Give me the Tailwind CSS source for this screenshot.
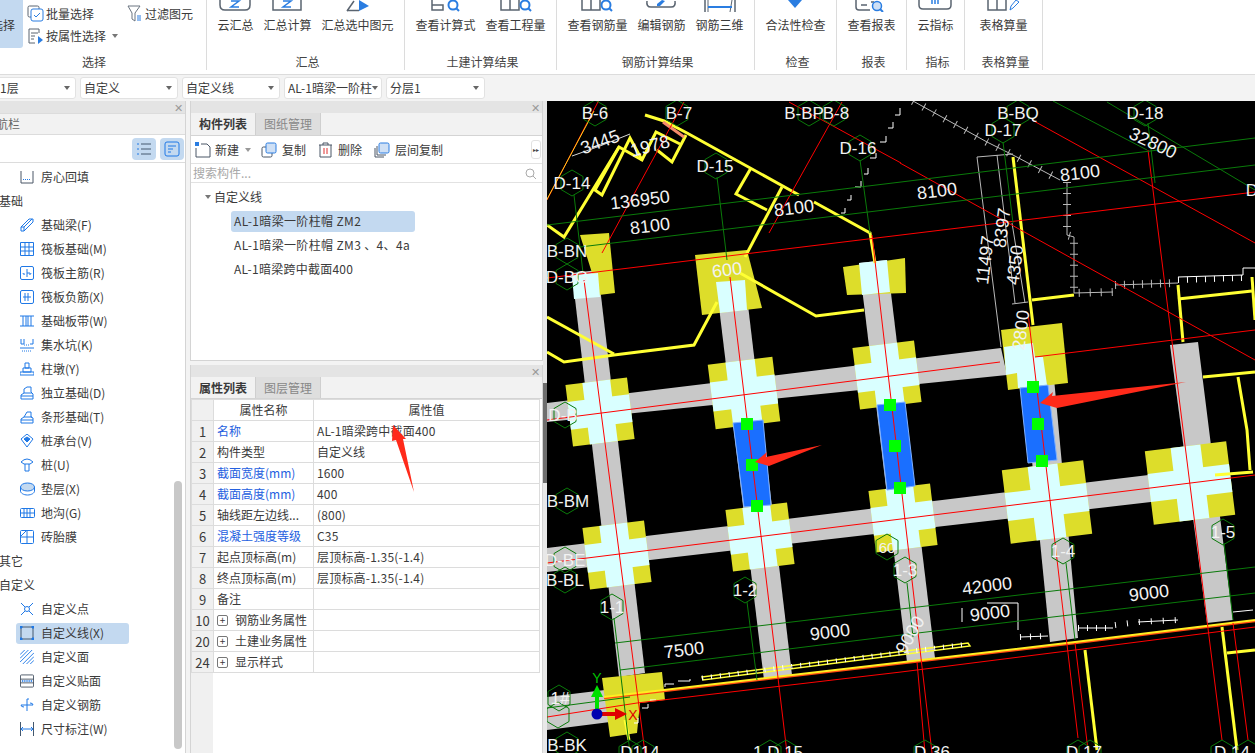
<!DOCTYPE html>
<html lang="zh"><head><meta charset="utf-8"><script src="https://cdn.jsdelivr.net/npm/@tailwindcss/browser@4"></script></head>
<body class="w-[1255px] h-[753px] overflow-hidden bg-[#f3f3f3] text-[#3a3a3a] text-[12px] font-['Noto_Sans_CJK_SC',sans-serif]">

<!-- Ribbon -->
<header class="flex h-[75px] bg-white border-b border-[#dcdcdc] overflow-hidden">
  <section class="relative w-[207px] h-[70px] border-r border-[#dcdcdc] shrink-0">
    <div class="absolute left-0 top-0 w-[23px] h-[48px] bg-[#c3d9f0] rounded-br-[3px] overflow-hidden"><span class="absolute left-[-9px] top-[17px] w-[36px] leading-[16px]">选择</span></div>
    <div class="absolute left-[27px] top-[5px] flex items-center gap-[2px]"><svg class="w-[17px] h-[17px]" viewBox="0 0 17 17" fill="none"><rect x="1" y="1" width="11" height="11" rx="1.5" stroke="#5a6470"/><rect x="4" y="4" width="12" height="12" rx="2" fill="#fff" stroke="#2a7de1"/><path d="M7 10l2 2 4-4" stroke="#2a7de1"/></svg><span class="leading-[16px]">批量选择</span></div>
    <div class="absolute left-[127px] top-[5px] flex items-center gap-[3px]"><svg class="w-[15px] h-[17px]" viewBox="0 0 15 17" fill="none"><path d="M1 1h12L8 8v8L5 14V8z" stroke="#6a7480"/><path d="M10 11h4M10 13h4M10 15h4" stroke="#2a7de1"/></svg><span class="leading-[16px]">过滤图元</span></div>
    <div class="absolute left-[28px] top-[28px] flex items-center gap-[2px]"><svg class="w-[16px] h-[16px]" viewBox="0 0 16 16" fill="none"><path d="M11 1H1v14h6M3 5h7M3 8h4M3 11h3M11 1v4" stroke="#5a6470"/><path d="M10 8l5 4-5 4z" fill="#2a7de1"/></svg><span class="leading-[16px]">按属性选择</span><span class="ml-[4px] w-0 h-0 border-x-[3px] border-x-transparent border-t-[4px] border-t-[#777]"></span></div>
    <div class="absolute left-0 right-0 bottom-0 text-center pr-[18px] leading-[16px] text-[#444]">选择</div>
  </section>
  <section class="flex flex-col justify-between items-center w-[198px] h-[70px] border-r border-[#dcdcdc] shrink-0">
    <div class="flex gap-[10px]">
      <div class="flex flex-col items-center gap-[5px]"><svg class="w-[36px] h-[12px]" viewBox="0 0 36 12" fill="none"><path d="M3 0v5q0 5 5 5h20q5 0 5-5V0" stroke="#5a6470" stroke-width="1.5"/><path d="M14 1h8l-8 6h8" stroke="#2a7de1" stroke-width="1.5"/></svg><span class="leading-[16px]">云汇总</span></div>
      <div class="flex flex-col items-center gap-[5px]"><svg class="w-[48px] h-[12px]" viewBox="0 0 48 12" fill="none"><path d="M10 0v10h28V0" stroke="#5a6470" stroke-width="1.5"/><path d="M20 1h8l-8 6h8" stroke="#2a7de1" stroke-width="1.5"/></svg><span class="leading-[16px]">汇总计算</span></div>
      <div class="flex flex-col items-center gap-[5px]"><svg class="w-[72px] h-[12px]" viewBox="0 0 72 12" fill="none"><path d="M25 11L32 1" stroke="#5a6470" stroke-width="1.5"/><path d="M25 10.5h12" stroke="#5a6470" stroke-width="1.5"/><path d="M37 0l10 6-10 5z" fill="#2a7de1"/></svg><span class="leading-[16px]">汇总选中图元</span></div>
    </div>
    <div class="pl-[4px] leading-[16px] text-[#444]">汇总</div>
  </section>
  <section class="flex flex-col justify-between items-center w-[152px] h-[70px] border-r border-[#dcdcdc] shrink-0">
    <div class="flex gap-[10px]">
      <div class="flex flex-col items-center gap-[5px]"><svg class="w-[60px] h-[12px]" viewBox="0 0 60 12" fill="none"><path d="M17 0v10h11V5h-11" stroke="#5a6470" stroke-width="1.5"/><circle cx="38" cy="5" r="4.5" stroke="#2a7de1" stroke-width="2"/><path d="M41 8l3 3" stroke="#2a7de1" stroke-width="2"/></svg><span class="leading-[16px]">查看计算式</span></div>
      <div class="flex flex-col items-center gap-[5px]"><svg class="w-[60px] h-[12px]" viewBox="0 0 60 12" fill="none"><path d="M15 0v10h18V0M24 0v10" stroke="#5a6470" stroke-width="1.5"/><circle cx="39" cy="5" r="4.5" stroke="#2a7de1" stroke-width="2"/><path d="M42 8l3 3" stroke="#2a7de1" stroke-width="2"/></svg><span class="leading-[16px]">查看工程量</span></div>
    </div>
    <div class="pl-[4px] leading-[16px] text-[#444]">土建计算结果</div>
  </section>
  <section class="flex flex-col justify-between items-center w-[198px] h-[70px] border-r border-[#dcdcdc] shrink-0">
    <div class="flex gap-[10px]">
      <div class="flex flex-col items-center gap-[5px]"><svg class="w-[60px] h-[12px]" viewBox="0 0 60 12" fill="none"><path d="M15 0v10h18V0M24 0v10" stroke="#5a6470" stroke-width="1.5"/><circle cx="39" cy="5" r="4.5" stroke="#2a7de1" stroke-width="2"/><path d="M42 8l3 3" stroke="#2a7de1" stroke-width="2"/></svg><span class="leading-[16px]">查看钢筋量</span></div>
      <div class="flex flex-col items-center gap-[5px]"><svg class="w-[48px] h-[12px]" viewBox="0 0 48 12" fill="none"><path d="M10 1q-1 6 4 6h20q5 0 4-6" stroke="#5a6470" stroke-width="1.5"/><path d="M20 4l5-4 3 1-5 5h-3z" fill="#2a7de1"/></svg><span class="leading-[16px]">编辑钢筋</span></div>
      <div class="flex flex-col items-center gap-[5px]"><svg class="w-[48px] h-[12px]" viewBox="0 0 48 12" fill="none"><path d="M9 0v12M39 0v12" stroke="#5a6470" stroke-width="1.5"/><path d="M12 0v12M36 0l-2 12" stroke="#5a6470"/><path d="M12 7h24" stroke="#2a7de1" stroke-width="2"/></svg><span class="leading-[16px]">钢筋三维</span></div>
    </div>
    <div class="pl-[4px] leading-[16px] text-[#444]">钢筋计算结果</div>
  </section>
  <section class="flex flex-col justify-between items-center w-[82px] h-[70px] border-r border-[#dcdcdc] shrink-0">
    <div class="flex flex-col items-center gap-[5px]"><svg class="w-[60px] h-[12px]" viewBox="0 0 60 12"><path d="M23 0h14l-7 8z" fill="#2a7de1"/></svg><span class="leading-[16px]">合法性检查</span></div>
    <div class="pl-[4px] leading-[16px] text-[#444]">检查</div>
  </section>
  <section class="flex flex-col justify-between items-center w-[70px] h-[70px] border-r border-[#dcdcdc] shrink-0">
    <div class="flex flex-col items-center gap-[5px]"><svg class="w-[48px] h-[12px]" viewBox="0 0 48 12" fill="none"><path d="M9 0v7q0 3 3 3h11M14 5h6" stroke="#5a6470" stroke-width="1.5"/><path d="M24 2h3" stroke="#5a6470" stroke-width="1.5"/><circle cx="30" cy="6" r="4.5" fill="#cfe0f5" stroke="#2a7de1" stroke-width="1.5"/><path d="M33 9l3 3" stroke="#2a7de1" stroke-width="2"/></svg><span class="leading-[16px]">查看报表</span></div>
    <div class="pl-[4px] leading-[16px] text-[#444]">报表</div>
  </section>
  <section class="flex flex-col justify-between items-center w-[58px] h-[70px] border-r border-[#dcdcdc] shrink-0">
    <div class="flex flex-col items-center gap-[5px]"><svg class="w-[36px] h-[12px]" viewBox="0 0 36 12" fill="none"><path d="M2 0v5q0 4 4 4h24q4 0 4-4V0" stroke="#5a6470" stroke-width="1.5"/><path d="M15 0v4M18 0v4M21 0v4" stroke="#2a7de1" stroke-width="1.5"/></svg><span class="leading-[16px]">云指标</span></div>
    <div class="pl-[4px] leading-[16px] text-[#444]">指标</div>
  </section>
  <section class="flex flex-col justify-between items-center w-[78px] h-[70px] border-r border-[#dcdcdc] shrink-0">
    <div class="flex flex-col items-center gap-[5px]"><svg class="w-[48px] h-[12px]" viewBox="0 0 48 12" fill="none"><path d="M9 0v10h18V0M18 0v10" stroke="#5a6470" stroke-width="1.5"/><path d="M31 10l1-4 5-6 3 2-6 6z" stroke="#2a7de1"/></svg><span class="leading-[16px]">表格算量</span></div>
    <div class="pl-[4px] leading-[16px] text-[#444]">表格算量</div>
  </section>
</header>

<!-- Selector bar -->
<nav class="flex items-center gap-[4px] h-[26px] ml-[-22px] pb-[1px]">
  <div class="flex items-center justify-between w-[98px] h-[22px] bg-white border border-[#e2e2e2] rounded-[3px] pl-[21px] pr-[5px]"><span>1层</span><i class="w-0 h-0 border-x-[3px] border-x-transparent border-t-[4px] border-t-[#666]"></i></div>
  <div class="flex items-center justify-between w-[98px] h-[22px] bg-white border border-[#e2e2e2] rounded-[3px] pl-[3px] pr-[5px]"><span>自定义</span><i class="w-0 h-0 border-x-[3px] border-x-transparent border-t-[4px] border-t-[#666]"></i></div>
  <div class="flex items-center justify-between w-[98px] h-[22px] bg-white border border-[#e2e2e2] rounded-[3px] pl-[3px] pr-[5px]"><span>自定义线</span><i class="w-0 h-0 border-x-[3px] border-x-transparent border-t-[4px] border-t-[#666]"></i></div>
  <div class="flex items-center justify-between w-[98px] h-[22px] bg-white border border-[#e2e2e2] rounded-[3px] pl-[3px] pr-[3px]"><span class="w-[84px] overflow-hidden whitespace-nowrap">AL-1暗梁一阶柱帽 ZM2</span><i class="w-0 h-0 border-x-[3px] border-x-transparent border-t-[4px] border-t-[#666]"></i></div>
  <div class="flex items-center justify-between w-[99px] h-[22px] bg-white border border-[#e2e2e2] rounded-[3px] pl-[3px] pr-[5px]"><span>分层1</span><i class="w-0 h-0 border-x-[3px] border-x-transparent border-t-[4px] border-t-[#666]"></i></div>
</nav>

<main class="flex h-[652px]">
  <!-- Navigation panel -->
  <aside class="relative w-[186px] h-full bg-white border-r border-[#d4d4d4] shrink-0 overflow-hidden">
    <div class="flex justify-end items-center h-[12px] pr-[2px] bg-[#e4e4e4] text-[#999] text-[11px] leading-none">✕</div>
    <div class="h-[22px] bg-[#f2f2f2] border-y border-[#dcdcdc] leading-[20px] text-[#666] ml-[-16px]">导航栏</div>
    <div class="flex justify-end items-center gap-[4px] h-[28px] pr-[1px] border-b border-[#dcdcdc]">
      <span class="flex items-center justify-center w-[24px] h-[22px] bg-[#c3d9f0] rounded-[4px]"><svg class="w-[16px] h-[14px]" viewBox="0 0 16 14" fill="none" stroke="#1f78e6"><path d="M1 2h2M1 7h2M1 12h2"/><path d="M5 2h10M5 7h10M5 12h10" stroke="#44586e"/></svg></span>
      <span class="flex items-center justify-center w-[24px] h-[22px] bg-[#c3d9f0] rounded-[4px]"><svg class="w-[16px] h-[16px]" viewBox="0 0 16 16" fill="none" stroke="#1f78e6"><rect x="1" y="1" width="14" height="14" rx="2"/><path d="M4 5h8M4 8h5M4 11h3"/></svg></span>
    </div>
    <ul class="absolute left-0 top-[64px] w-full">
      <li class="flex items-center h-[24px] pl-[20px] gap-[7px]"><svg class="w-[14px] h-[14px]" viewBox="0 0 14 14" fill="none" stroke="#4a5666"><path d="M1 1v12h12V1"/><path d="M3 9.500h8" stroke="#1f78e6" stroke-dasharray="1 1"/></svg>房心回填</li>
      <li class="flex items-center h-[24px] ml-[-1px]">基础</li>
      <li class="flex items-center h-[24px] pl-[20px] gap-[7px]"><svg class="w-[14px] h-[14px]" viewBox="0 0 14 14" fill="none" stroke="#1f78e6"><path d="M1 9l8-8h4v3l-9 9H1zM1 9h3v4M4 9l8-8"/></svg>基础梁(F)</li>
      <li class="flex items-center h-[24px] pl-[20px] gap-[7px]"><svg class="w-[14px] h-[14px]" viewBox="0 0 14 14" fill="none" stroke="#1f78e6"><path d="M.5.500h13v13H.500zM5 0v14M9 0v14M0 5h14M0 9h14"/></svg>筏板基础(M)</li>
      <li class="flex items-center h-[24px] pl-[20px] gap-[7px]"><svg class="w-[14px] h-[14px]" viewBox="0 0 14 14" fill="none" stroke="#1f78e6"><rect x=".5" y=".5" width="13" height="13" rx="1.500"/><path d="M7 3v8M3 7q0 2 2 1M11 7q0 2-2 1M7 7h3"/></svg>筏板主筋(R)</li>
      <li class="flex items-center h-[24px] pl-[20px] gap-[7px]"><svg class="w-[14px] h-[14px]" viewBox="0 0 14 14" fill="none" stroke="#1f78e6"><rect x=".5" y=".5" width="13" height="13" rx="1.500"/><path d="M5 3v8M8 3v8M3 7h8"/></svg>筏板负筋(X)</li>
      <li class="flex items-center h-[24px] pl-[20px] gap-[7px]"><svg class="w-[14px] h-[14px]" viewBox="0 0 14 14" fill="none" stroke="#1f78e6"><path d="M0 2h14M0 12h14M3 2v10M6 2v10M8 2v10M11 2v10"/></svg>基础板带(W)</li>
      <li class="flex items-center h-[24px] pl-[20px] gap-[7px]"><svg class="w-[14px] h-[14px]" viewBox="0 0 14 14" fill="none" stroke="#1f78e6"><path d="M1 1v5h3V1M13 1v5h-3M0 10h14"/><path d="M2 13h10M4 7h6" stroke-dasharray="1 1"/></svg>集水坑(K)</li>
      <li class="flex items-center h-[24px] pl-[20px] gap-[7px]"><svg class="w-[14px] h-[14px]" viewBox="0 0 14 14" fill="none" stroke="#1f78e6"><path d="M5 1h4v5H5zM3 6h8v4H3zM0 10h14v3H0z"/></svg>柱墩(Y)</li>
      <li class="flex items-center h-[24px] pl-[20px] gap-[7px]"><svg class="w-[14px] h-[14px]" viewBox="0 0 14 14" fill="none" stroke="#1f78e6"><path d="M1 13V9l3-2V3l3-2h4v5l2 2v5zM4 7h8M1 10h12"/></svg>独立基础(D)</li>
      <li class="flex items-center h-[24px] pl-[20px] gap-[7px]"><svg class="w-[14px] h-[14px]" viewBox="0 0 14 14" fill="none" stroke="#1f78e6"><path d="M1 13V9l3-2 3-5h4v5l2 1v5zM4 7h8M1 10h12"/></svg>条形基础(T)</li>
      <li class="flex items-center h-[24px] pl-[20px] gap-[7px]"><svg class="w-[14px] h-[14px]" viewBox="0 0 14 14" fill="none" stroke="#1f78e6"><path d="M7 0l6 5-6 8-6-8z"/><path d="M7 3l3 2-3 3-3-3z" fill="#1f78e6"/></svg>桩承台(V)</li>
      <li class="flex items-center h-[24px] pl-[20px] gap-[7px]"><svg class="w-[14px] h-[14px]" viewBox="0 0 14 14" fill="none" stroke="#1f78e6"><path d="M1 4q6-6 12 0l-3 2H4zM5 6v7h4V6"/></svg>桩(U)</li>
      <li class="flex items-center h-[24px] pl-[20px] gap-[7px]"><svg class="w-[15px] h-[14px]" viewBox="0 0 15 14" fill="none" stroke="#1f78e6"><ellipse cx="7.500" cy="5" rx="7" ry="4" fill="#c3d9f0"/><path d="M.5 5v4c0 2 3 4 7 4s7-2 7-4V5"/></svg><span class="ml-[-1px]">垫层(X)</span></li>
      <li class="flex items-center h-[24px] pl-[20px] gap-[7px]"><svg class="w-[15px] h-[14px]" viewBox="0 0 15 14" fill="none" stroke="#1f78e6"><rect x=".5" y="2.500" width="14" height="9" rx="1"/><path d="M.5 7h14M4 3v8M7 3v8M10 3v8"/></svg><span class="ml-[-1px]">地沟(G)</span></li>
      <li class="flex items-center h-[24px] pl-[20px] gap-[7px]"><svg class="w-[14px] h-[14px]" viewBox="0 0 14 14" fill="none" stroke="#1f78e6"><rect x=".5" y=".5" width="13" height="13" rx="1"/><path d="M7 0v14M0 7h14M1 6l5-5"/></svg>砖胎膜</li>
      <li class="flex items-center h-[24px] ml-[-1px]">其它</li>
      <li class="flex items-center h-[24px] ml-[-1px]">自定义</li>
      <li class="flex items-center h-[24px] pl-[20px] gap-[7px]"><svg class="w-[14px] h-[14px]" viewBox="0 0 14 14" fill="none" stroke="#1f78e6"><path d="M1 1l4 4M13 1L9 5M1 13l4-4M13 13L9 9"/><circle cx="7" cy="7" r="2.500"/></svg>自定义点</li>
      <li class="relative flex items-center h-[24px] pl-[20px] gap-[7px]"><span class="absolute left-[16px] top-[2px] w-[113px] h-[21px] bg-[#c3d9f0] rounded-[3px]"></span><svg class="relative w-[14px] h-[14px]" viewBox="0 0 14 14" fill="none" stroke="#1f78e6"><path d="M1 1h12v12H1z" stroke="#44586e"/><path d="M0 0h2v2H0zM12 0h2v2h-2zM0 12h2v2H0zM12 12h2v2h-2z" fill="#1f78e6"/></svg><span class="relative">自定义线(X)</span></li>
      <li class="flex items-center h-[24px] pl-[20px] gap-[7px]"><svg class="w-[14px] h-[14px]" viewBox="0 0 15 15" fill="none" stroke="#1f78e6"><path d="M0 5l5-5M0 9l9-9M0 13L13 0M3 15L15 3M7 15l8-8M11 15l4-4"/></svg>自定义面</li>
      <li class="flex items-center h-[24px] pl-[20px] gap-[7px]"><svg class="w-[14px] h-[14px]" viewBox="0 0 15 14" fill="none" stroke="#4a5666"><rect x=".5" y=".5" width="14" height="13" rx="1"/><path d="M0 5h15M0 9h15"/><path d="M2 7h11" stroke="#1f78e6" stroke-dasharray="1 1" stroke-width="2"/></svg>自定义贴面</li>
      <li class="flex items-center h-[24px] pl-[20px] gap-[7px]"><svg class="w-[14px] h-[14px]" viewBox="0 0 14 14" fill="none" stroke="#1f78e6"><path d="M7 1v12M1 7h12M1 7q0 2 3 2M13 7q0-2-3-2M7 1h2"/></svg>自定义钢筋</li>
      <li class="flex items-center h-[24px] pl-[20px] gap-[7px]"><svg class="w-[14px] h-[14px]" viewBox="0 0 14 14" fill="none" stroke="#1f78e6"><path d="M.5 0v14M13.500 0v14" stroke="#44586e"/><path d="M1 7h12M3 5L1 7l2 2M11 5l2 2-2 2"/></svg>尺寸标注(W)</li>
    </ul>
    <div class="absolute left-[174px] top-[380px] w-[8px] h-[268px] bg-[#c8c8c8] rounded-[4px]"></div>
  </aside>

  <div class="w-[4px] shrink-0"></div>

  <!-- Middle panels -->
  <div class="relative flex flex-col w-[353px] h-full shrink-0 gap-[4px]">
    <section class="h-[260px] bg-white border-x border-b border-[#d4d4d4] flex flex-col">
      <div class="flex justify-end items-center h-[12px] pr-[2px] bg-[#e4e4e4] text-[#999] text-[11px] leading-none">✕</div>
      <div class="flex h-[23px] bg-[#f2f2f2] border-b border-[#d4d4d4]">
        <div class="w-[65px] text-center leading-[22px] font-bold border-r border-[#cfcfcf]">构件列表</div>
        <div class="w-[65px] text-center leading-[22px] text-[#888] bg-[#dedede] border-r border-[#cfcfcf]">图纸管理</div>
      </div>
      <div class="relative flex items-center h-[28px] border-b border-[#e2e2e2] pl-[4px]">
        <svg class="w-[16px] h-[16px]" viewBox="0 0 16 16" fill="none"><path d="M6 2h6l3 3v10H1V6" stroke="#4a5666"/><rect x="0" y="0" width="4" height="4" fill="#2a7de1"/></svg><span class="ml-[4px]">新建</span><i class="ml-[6px] w-0 h-0 border-x-[3px] border-x-transparent border-t-[4px] border-t-[#999]"></i>
        <svg class="ml-[10px] w-[16px] h-[16px]" viewBox="0 0 16 16" fill="none"><rect x="1" y="5" width="10" height="10" rx="1.500" stroke="#4a5666"/><rect x="5" y="1" width="10" height="10" rx="1.500" fill="#cfe0f5" stroke="#2a7de1"/></svg><span class="ml-[5px]">复制</span>
        <svg class="ml-[12px] w-[15px] h-[16px]" viewBox="0 0 15 16" fill="none" stroke="#4a5666"><path d="M1 3h13M5 3V1h5v2M2 3v12h11V3"/><path d="M6 6v6M9 6v6" stroke="#e03030"/></svg><span class="ml-[5px]">删除</span>
        <svg class="ml-[12px] w-[16px] h-[16px]" viewBox="0 0 16 16" fill="none"><path d="M1 6v9h9M3 4v9h9" stroke="#4a5666"/><rect x="5" y="1" width="10" height="10" rx="1.500" fill="#cfe0f5" stroke="#2a7de1"/></svg><span class="ml-[5px]">层间复制</span>
        <span class="absolute right-[1px] top-[4px] w-[10px] h-[19px] flex items-center justify-center border border-[#e2e2e2] rounded-[3px] text-[6px] text-[#444]">▸▸</span>
      </div>
      <div class="flex items-center justify-between h-[19px] border-b border-[#e2e2e2] px-[2px] pr-[6px] text-[#a8a8a8]"><span>搜索构件...</span><svg class="w-[11px] h-[11px]" viewBox="0 0 11 11" fill="none" stroke="#aaa"><circle cx="5" cy="5" r="4"/><path d="M8 8l3 3"/></svg></div>
      <div class="relative flex-1">
        <div class="flex items-center h-[24px] mt-[2px] pl-[14px] gap-[3px]"><i class="w-0 h-0 border-x-[3px] border-x-transparent border-t-[4px] border-t-[#777]"></i><span>自定义线</span></div>
        <div class="flex items-center h-[21px] mx-[40px] my-[1.500px] w-[184px] pl-[3px] bg-[#c3d9f0] rounded-[3px] tracking-[0.35px]">AL-1暗梁一阶柱帽 ZM2</div>
        <div class="flex items-center h-[24px] pl-[43px] tracking-[0.35px]">AL-1暗梁一阶柱帽 ZM3 、4、4a</div>
        <div class="flex items-center h-[24px] pl-[43px] tracking-[0.25px]">AL-1暗梁跨中截面400</div>
      </div>
    </section>
    <section class="flex-1 bg-white border-x border-[#d4d4d4] flex flex-col">
      <div class="flex justify-end items-center h-[12px] pr-[2px] bg-[#e4e4e4] text-[#999] text-[11px] leading-none">✕</div>
      <div class="flex h-[22px] bg-[#f2f2f2] border-b border-[#d4d4d4]">
        <div class="w-[65px] text-center leading-[21px] font-bold border-r border-[#cfcfcf]">属性列表</div>
        <div class="w-[65px] text-center leading-[21px] text-[#888] bg-[#dedede] border-r border-[#cfcfcf]">图层管理</div>
      </div>
      <div class="relative flex-1 bg-[linear-gradient(to_right,#f0f0f0_22px,#ffffff_22px)]">
        <table class="table-fixed w-[349px] border-collapse text-[12px]">
          <colgroup><col class="w-[22px]"><col class="w-[100px]"><col></colgroup>
          <tbody class="[&_td]:h-[21px] [&_td]:border [&_td]:border-[#dcdcdc] [&_td]:leading-none">
            <tr class="bg-white"><td class="bg-[#f0f0f0]"></td><td class="text-center">属性名称</td><td class="text-center">属性值</td></tr>
            <tr><td class="bg-[#f0f0f0] text-center text-[13px]">1</td><td class="pl-[3px] text-[#2460e0]">名称</td><td class="pl-[3px] tracking-[0.2px]">AL-1暗梁跨中截面400</td></tr>
            <tr><td class="bg-[#f0f0f0] text-center text-[13px]">2</td><td class="pl-[3px]">构件类型</td><td class="pl-[3px]">自定义线</td></tr>
            <tr><td class="bg-[#f0f0f0] text-center text-[13px]">3</td><td class="pl-[3px] text-[#2460e0]">截面宽度(mm)</td><td class="pl-[3px] tracking-[0.2px]">1600</td></tr>
            <tr><td class="bg-[#f0f0f0] text-center text-[13px]">4</td><td class="pl-[3px] text-[#2460e0]">截面高度(mm)</td><td class="pl-[3px] tracking-[0.2px]">400</td></tr>
            <tr><td class="bg-[#f0f0f0] text-center text-[13px]">5</td><td class="pl-[3px]">轴线距左边线...</td><td class="pl-[3px] tracking-[0.2px]">(800)</td></tr>
            <tr><td class="bg-[#f0f0f0] text-center text-[13px]">6</td><td class="pl-[3px] text-[#2460e0]">混凝土强度等级</td><td class="pl-[3px] tracking-[0.2px]">C35</td></tr>
            <tr><td class="bg-[#f0f0f0] text-center text-[13px]">7</td><td class="pl-[3px]">起点顶标高(m)</td><td class="pl-[3px] tracking-[0.2px]">层顶标高-1.35(-1.4)</td></tr>
            <tr><td class="bg-[#f0f0f0] text-center text-[13px]">8</td><td class="pl-[3px]">终点顶标高(m)</td><td class="pl-[3px] tracking-[0.2px]">层顶标高-1.35(-1.4)</td></tr>
            <tr><td class="bg-[#f0f0f0] text-center text-[13px]">9</td><td class="pl-[3px]">备注</td><td class="pl-[3px]"></td></tr>
            <tr><td class="bg-[#f0f0f0] text-center text-[13px]">10</td><td class="pl-[3px]"><span class="flex items-center gap-[7px]"><i class="flex items-center justify-center w-[11px] h-[11px] border border-[#777] rounded-[2px] not-italic text-[10px] leading-none">+</i>钢筋业务属性</span></td><td></td></tr>
            <tr><td class="bg-[#f0f0f0] text-center text-[13px]">20</td><td class="pl-[3px]"><span class="flex items-center gap-[7px]"><i class="flex items-center justify-center w-[11px] h-[11px] border border-[#777] rounded-[2px] not-italic text-[10px] leading-none">+</i>土建业务属性</span></td><td></td></tr>
            <tr><td class="bg-[#f0f0f0] text-center text-[13px]">24</td><td class="pl-[3px]"><span class="flex items-center gap-[7px]"><i class="flex items-center justify-center w-[11px] h-[11px] border border-[#777] rounded-[2px] not-italic text-[10px] leading-none">+</i>显示样式</span></td><td></td></tr>
          </tbody>
        </table>
        <svg class="absolute left-[195px] top-[22px] w-[30px] h-[74px]" viewBox="0 0 30 74"><path d="M7 4l13 14h-3l11 53L10 19l-4 1z" fill="#ff2a1a"/></svg>
      </div>
    </section>
  </div>

  <div class="relative w-[4px] h-full shrink-0 bg-[#e8e8e8]"><span class="absolute left-0 top-[282px] w-[4px] h-[100px] bg-[#6e6e6e]"></span></div>

  <!-- CAD canvas -->
  <svg class="w-[708px] h-[652px] bg-black shrink-0 font-['Liberation_Sans',sans-serif]" viewBox="547 101 708 652" fill="none">
    <defs>
      <g id="x"><rect x="-31" y="-31" width="62" height="62" fill="#dddd2a"/><rect x="-14" y="-31" width="28" height="62" fill="#d9ffff"/><rect x="-31" y="-14" width="62" height="28" fill="#d9ffff"/></g>
      <g id="y"><rect x="-41" y="-37" width="82" height="74" fill="#dddd2a"/><rect x="-15" y="-37" width="30" height="74" fill="#d9ffff"/><rect x="-41" y="-14" width="82" height="28" fill="#d9ffff"/></g>
      <polygon id="h" points="0,-13 11,-6.500 11,6.500 0,13 -11,6.500 -11,-6.500" stroke="#0a7a0a"/>
    </defs>
    <!-- beams and columns -->
    <g fill="#c8c8c8">
      <polygon points="547,403 1001,348 1007,375 547,422"/>
      <polygon points="547,548 1190,470 1194,497 547,572"/>
      <polygon points="572,273 598,270 645,673 619,677"/>
      <polygon points="716,282 745,280 792,675 764,680"/>
      <polygon points="859,263 887,260 935,658 907,662"/>
      <polygon points="1020,340 1050,335 1078,638 1050,642"/>
      <polygon points="1170,345 1198,342 1233,620 1207,623"/>
      <polygon points="547,697 605,690 610,722 547,730"/>
    </g>
    <!-- column caps -->
    <polygon fill="#dddd2a" points="580,235 609,233 615,293 599,295"/><polygon fill="#d9ffff" points="572,275 598,273 600,297 574,299"/>
    <polygon fill="#dddd2a" points="695,255 747,250 762,308 702,315"/><polygon fill="#d9ffff" points="716,282 745,280 747,310 720,313"/>
    <polygon fill="#dddd2a" points="843,267 905,258 906,293 847,295"/><polygon fill="#d9ffff" points="859,263 887,260 890,292 862,295"/>
    <polygon fill="#dddd2a" points="602,678 662,672 665,700 640,703 637,733 610,737"/>
    <!-- crossings -->
    <use href="#x" transform="translate(600 412) rotate(-7)"/>
    <use href="#x" transform="translate(744 393) rotate(-7) scale(1.05)"/>
    <use href="#x" transform="translate(887 375) rotate(-7)"/>
    <use href="#x" transform="translate(617 555) rotate(-7)"/>
    <use href="#x" transform="translate(760 537) rotate(-7)"/>
    <use href="#x" transform="translate(903 518) rotate(-7)"/>
    <use href="#y" transform="translate(1047 502) rotate(-7)"/>
    <use href="#y" transform="translate(1190 483) rotate(-7)"/>
    <polygon fill="#dddd2a" points="1001,330 1062,323 1068,383 1008,390"/>
    <polygon fill="#d9ffff" points="1004,347 1033,343 1035,357 1043,357 1047,385 1018,388 1017,373 1006,375"/>
    <!-- selected panels -->
    <polygon fill="#1a6fff" stroke="#7fb0ff" points="733,423 763,420 771,505 744,507"/>
    <polygon fill="#1a6fff" stroke="#7fb0ff" points="877,405 905,402 915,486 887,490"/>
    <polygon fill="#1a6fff" stroke="#7fb0ff" points="1020,388 1048,385 1057,460 1028,463"/>
    <!-- yellow lines -->
    <g stroke="#ffff33" stroke-width="3">
      <polyline points="645,115 664,121 687,133 799,195"/>
      <polyline points="814,202 870,233 875,263"/>
      <polyline points="547,225 564,237 619,147 642,160 656,132 680,144"/>
      <polyline points="657,150 672,162 686,135"/>
      <polyline points="619,147 595,190 602,195 630,138 642,160"/>
      <polyline points="751,168 736,194 767,210"/>
      <polyline points="782,187 745,257"/>
      <polyline points="717,302 694,345 614,355 564,362 547,352"/>
      <polyline points="547,317 614,354"/>
      <polyline points="740,273 816,316 864,310"/>
      <polyline points="1013,157 1033,325"/>
      <polyline points="1032,300 1074,295"/>
      <polyline points="1178,285 1183,342"/>
      <polyline points="1178,299 1252,291"/>
      <polyline points="1252,277 1255,320"/>
      <polyline points="1203,377 1255,372" />
      <polyline points="1238,377 1247,430 1250,470"/>
      <polyline points="1215,475 1253,472"/>
      <polyline points="1085,650 1097,750"/>
      <polyline points="1222,627 1237,750"/>
      <polyline points="1227,653 1255,650"/>
      <polyline points="625,720 629,740"/>
    </g>
    <polygon stroke="#ffff33" stroke-width="1.500" points="702,677 968,643 970,646 703,680"/>
    <polyline points="604,698 1075,643 1255,621" stroke="#ff4a10" stroke-width="2.500"/>
    <polyline points="604,697 1075,642 1255,620" stroke="#ffee22" stroke-width="2"/>
    <line x1="663" y1="122" x2="684" y2="137" stroke="#f58a6a" stroke-width="3"/>
    <!-- stepped walls -->
    <g stroke="#b9b9b9">
      <polyline points="913,101 987,142 1013,155 1060,180"/><polyline stroke-width="8" stroke-dasharray="1 11" points="913,101 987,142 1013,155 1060,180"/>
      <polyline points="1067,182 1067,235 1074,237 1074,293 1113,292"/><polyline stroke-width="8" stroke-dasharray="1 10" points="1067,182 1067,235 1074,237 1074,293 1113,292"/>
      <polyline points="1115,285 1178,283"/><polyline stroke-width="8" stroke-dasharray="1 8" points="1115,285 1178,283"/>
    </g>
    <g stroke="#fff">
      <polyline points="1178,277 1243,275 1243,268 1255,268"/><polyline stroke-width="6" stroke-dasharray="1 8" points="1178,280 1243,278"/>
      <path d="M900 108v7h-5M893 122v6h-5M886 136v6h-6M876 153v5h-6M868 168v6h-4M861 181v6h-6M851 195v5h-4M845 208v5h-4"/>
      <path d="M962 608v14"/>
      <polyline points="987,603 1018,603 1018,630"/><polyline points="1020,637 1048,636"/><polyline stroke-width="6" stroke-dasharray="1 9" points="1020,637 1048,636"/>
      <polyline points="1078,628 1113,628"/><polyline stroke-width="6" stroke-dasharray="1 8" points="1078,628 1113,628"/>
      <polyline stroke-width="6" stroke-dasharray="1 11" points="1115,625 1138,622 1178,620"/><polyline points="1138,622 1178,620"/>
      <polyline points="1233,612 1253,610"/>
      <polyline stroke-width="5" stroke-dasharray="1 8" points="702,678 968,644"/>
      <path d="M665 687v-3h9M678 681h12v-2M650 700h6M642 708h6v-4M634 723h4v-5"/>
    </g>
    <!-- dimension lines -->
    <g stroke="#b9b9b9"><polyline points="1001,347 977,157 1013,154"/><polyline points="997,155 1015,303"/><polyline points="1012,223 1025,303"/><polyline points="1012,304 1028,302"/></g>
    <polyline points="572,156 600,146 630,134" stroke="#d8d8d8"/>
    <!-- red lines -->
    <g stroke="#ff0000">
      <line x1="584" y1="280" x2="645" y2="753"/>
      <line x1="730" y1="277" x2="787" y2="753"/>
      <line x1="872" y1="235" x2="932" y2="753"/>
      <line x1="917" y1="662" x2="925" y2="753"/>
      <line x1="1028" y1="313" x2="1078" y2="738"/>
      <line x1="1075" y1="643" x2="1088" y2="750"/>
      <line x1="1148" y1="150" x2="1222" y2="740"/>
      <line x1="1233" y1="623" x2="1248" y2="740"/>
      <polyline points="547,278 901,235 1255,192"/>
      <polyline points="547,420 1000,362"/>
      <polyline points="1035,357 1255,330"/>
      <line x1="547" y1="563" x2="1255" y2="475"/>
      <polyline points="547,717 637,703 901,672 1075,650 1255,627"/>
      <line x1="900" y1="163" x2="1255" y2="360"/>
      <line x1="1032" y1="120" x2="1255" y2="243"/>
      <polyline points="789,102 901,163"/>
      <line x1="684" y1="102" x2="602" y2="253"/>
      <line x1="842" y1="102" x2="769" y2="233"/>
      <line x1="599" y1="100" x2="547" y2="200"/>
    </g>
    <line x1="596" y1="108" x2="547" y2="200" stroke="#ffd21a" transform="translate(-2 3)"/>
    <!-- green lines -->
    <g stroke="#0a7a0a">
      <polyline points="547,225 901,182 1255,138"/>
      <polyline points="580,247 901,208 1255,165"/>
      <line x1="574" y1="195" x2="583" y2="273"/><line x1="717" y1="177" x2="727" y2="260"/><line x1="860" y1="160" x2="870" y2="233"/><line x1="1003" y1="142" x2="1013" y2="223"/><line x1="1148" y1="123" x2="1155" y2="183"/>
      <line x1="1107" y1="102" x2="1255" y2="190"/><line x1="1053" y1="101" x2="1147" y2="150"/>
      <polyline points="615,643 901,609 1255,567"/>
      <polyline points="620,670 901,635 1255,593"/>
      <line x1="614" y1="618" x2="630" y2="753"/><line x1="747" y1="602" x2="757" y2="680"/><line x1="907" y1="583" x2="913" y2="637"/><line x1="1066" y1="563" x2="1075" y2="640"/><line x1="1224" y1="543" x2="1233" y2="620"/>
      <line x1="547" y1="708" x2="630" y2="697"/>
    </g>
    <!-- grips -->
    <g fill="#00ff00"><rect x="741" y="418" width="12" height="12"/><rect x="746" y="459" width="12" height="12"/><rect x="751" y="500" width="12" height="12"/><rect x="884" y="399" width="12" height="12"/><rect x="889" y="440" width="12" height="12"/><rect x="894" y="482" width="12" height="12"/><rect x="1027" y="381" width="12" height="12"/><rect x="1032" y="418" width="12" height="12"/><rect x="1036" y="455" width="12" height="12"/></g>
    <!-- axis bubbles -->
    <use href="#h" x="595" y="113"/><use href="#h" x="677" y="113"/><use href="#h" x="809" y="113"/><use href="#h" x="834" y="113"/><use href="#h" x="860" y="148"/><use href="#h" x="716" y="166"/><use href="#h" x="572" y="183"/><use href="#h" x="567" y="251"/><use href="#h" x="567" y="277"/><use href="#h" x="565" y="415"/><use href="#h" x="1018" y="113"/><use href="#h" x="1003" y="130"/><use href="#h" x="1145" y="113"/><use href="#h" x="567" y="501"/><use href="#h" x="565" y="560"/><use href="#h" x="565" y="580"/><use href="#h" x="612" y="607"/><use href="#h" x="745" y="590"/><use href="#h" x="559" y="698"/><use href="#h" x="558" y="715"/><use href="#h" x="567" y="745"/><use href="#h" x="887" y="547"/><use href="#h" x="905" y="570"/><use href="#h" x="1063" y="551"/><use href="#h" x="1223" y="532"/><use href="#h" x="630" y="753"/><use href="#h" x="643" y="753"/><use href="#h" x="770" y="753"/><use href="#h" x="786" y="753"/><use href="#h" x="925" y="753"/><use href="#h" x="1078" y="753"/><use href="#h" x="1090" y="753"/><use href="#h" x="1222" y="753"/><use href="#h" x="1248" y="753"/>
    <!-- labels -->
    <g fill="#f2f2f2" font-size="17" text-anchor="middle" dominant-baseline="central">
      <text x="595" y="113">B-6</text><text x="679" y="113">B-7</text><text x="804" y="113">B-BP</text><text x="836" y="113">B-8</text><text x="858" y="148">D-16</text><text x="715" y="166">D-15</text><text x="572" y="183">D-14</text><text x="567" y="251">B-BN</text><text x="567" y="277">D-BG</text><text x="563" y="415">D-B</text><text x="1018" y="113">B-BQ</text><text x="1003" y="130">D-17</text><text x="1145" y="113">D-18</text><text x="568" y="501">B-BM</text><text x="565" y="560">D-BE</text><text x="565" y="580">B-BL</text><text x="612" y="607">1-1</text><text x="745" y="590">1-2</text><text x="560" y="698">1#</text><text x="567" y="745">B-BK</text><text x="887" y="547" font-size="15">60</text><text x="905" y="570">1-3</text><text x="1063" y="551">1-4</text><text x="1223" y="532">1-5</text><text x="640" y="752">D114</text><text x="778" y="752">1 D 15</text><text x="932" y="752">D 36</text><text x="1084" y="752">D 17</text><text x="1232" y="752">D 14</text><text x="1252" y="190">D</text>
      <g font-size="18">
      <text transform="translate(600 142) rotate(-20)">3445</text>
      <text transform="translate(650 146) rotate(-15)">1978</text>
      <text transform="translate(640 200) rotate(-7)">136950</text>
      <text transform="translate(650 226) rotate(-7)">8100</text>
      <text transform="translate(794 208) rotate(-7)">8100</text>
      <text transform="translate(727 270) rotate(-7)">600</text>
      <text transform="translate(937 191) rotate(-7)">8100</text>
      <text transform="translate(1080 173) rotate(-7)">8100</text>
      <text transform="translate(1153 143) rotate(25)">32800</text>
      <text transform="translate(985 260) rotate(-83)">11497</text>
      <text transform="translate(1002 228) rotate(-83)">8397</text>
      <text transform="translate(1015 265) rotate(-83)">4350</text>
      <text transform="translate(1021 330) rotate(-83)">2800</text>
      <text transform="translate(684 650) rotate(-7)">7500</text>
      <text transform="translate(830 632) rotate(-7)">9000</text>
      <text transform="translate(987 586) rotate(-7)">42000</text>
      <text transform="translate(990 613) rotate(-7)">9000</text>
      <text transform="translate(1149 593) rotate(-7)">9000</text>
      <text transform="translate(910 635) rotate(-60)">9000</text>
      </g>
    </g>
    <!-- UCS gizmo -->
    <line x1="597" y1="714" x2="597" y2="695" stroke="#00e000" stroke-width="4"/><polygon fill="#00e000" points="597,685 603,697 591,697"/>
    <text x="597" y="678" fill="#00c000" font-size="14" text-anchor="middle" dominant-baseline="central">Y</text>
    <line x1="597" y1="714" x2="616" y2="714" stroke="#e00000" stroke-width="4"/><polygon fill="#e00000" points="627,714 615,708 615,720"/>
    <text x="633" y="715" fill="#e00000" font-size="14" text-anchor="middle" dominant-baseline="central">X</text>
    <circle cx="597" cy="714" r="5.500" fill="#0000b0"/>
    <!-- annotation arrows -->
    <polygon fill="#ff2a1a" points="755,462 767,452 766,457 822,445 769,466"/>
    <polygon fill="#ff2a1a" points="1040,403 1053,392 1052,396 1186,382 1057,408"/>
  </svg>
</main>
</body></html>
